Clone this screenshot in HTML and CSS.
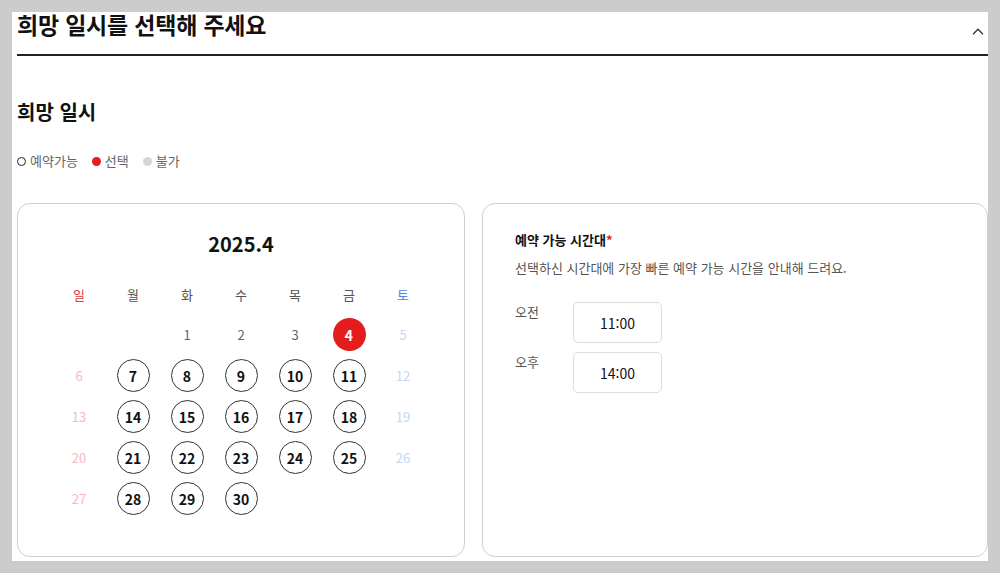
FILE: index.html
```html
<!DOCTYPE html>
<html lang="ko">
<head>
<meta charset="utf-8">
<title>희망 일시</title>
<link rel="stylesheet" href="styles.css">
</head>
<body>
<div class="viewport">
  <div class="content">
    <header class="header">
      <h1 class="title">희망 일시를 선택해 주세요</h1>
      <svg class="chevron" width="12" height="7" viewBox="0 0 12 7"><path d="M1 6.2 L6 1.2 L11 6.2" fill="none" stroke="#333" stroke-width="1.3"/></svg>
    </header>

    <h2 class="section-title">희망 일시</h2>

    <div class="legend">
      <span class="legend-item"><span class="dot dot-open"></span>예약가능</span>
      <span class="legend-item"><span class="dot dot-selected"></span>선택</span>
      <span class="legend-item"><span class="dot dot-disabled"></span>불가</span>
    </div>

    <div class="cards">
      <div class="card calendar-card">
        <div class="month">2025.4</div>
        <div class="cal-grid">
          <span class="wd sun">일</span><span class="wd">월</span><span class="wd">화</span><span class="wd">수</span><span class="wd">목</span><span class="wd">금</span><span class="wd sat">토</span>

          <span class="day"></span><span class="day"></span>
          <span class="day off">1</span><span class="day off">2</span><span class="day off">3</span>
          <span class="day selected">4</span><span class="day sat-day">5</span>

          <span class="day sun-day">6</span>
          <span class="day avail">7</span><span class="day avail">8</span><span class="day avail">9</span><span class="day avail">10</span><span class="day avail">11</span>
          <span class="day sat-day">12</span>

          <span class="day sun-day">13</span>
          <span class="day avail">14</span><span class="day avail">15</span><span class="day avail">16</span><span class="day avail">17</span><span class="day avail">18</span>
          <span class="day sat-day">19</span>

          <span class="day sun-day">20</span>
          <span class="day avail">21</span><span class="day avail">22</span><span class="day avail">23</span><span class="day avail">24</span><span class="day avail">25</span>
          <span class="day sat-day">26</span>

          <span class="day sun-day">27</span>
          <span class="day avail">28</span><span class="day avail">29</span><span class="day avail">30</span>
        </div>
      </div>

      <div class="card time-card">
        <div class="time-title">예약 가능 시간대<span class="req">*</span></div>
        <p class="time-desc">선택하신 시간대에 가장 빠른 예약 가능 시간을 안내해 드려요.</p>
        <div class="time-rows">
          <div class="time-row">
            <span class="time-label">오전</span>
            <button class="time-btn">11:00</button>
          </div>
          <div class="time-row">
            <span class="time-label">오후</span>
            <button class="time-btn">14:00</button>
          </div>
        </div>
      </div>
    </div>
  </div>
</div>
</body>
</html>
```

FILE: styles.css
```css
* { box-sizing: border-box; }

html, body {
  margin: 0;
  padding: 0;
}

body {
  background: #cccccc;
  padding: 12px;
  font-family: "Noto Sans CJK KR", "Noto Sans", sans-serif;
  color: #111;
}

.viewport {
  width: 976px;
  height: 549px;
  background: #fff;
  overflow: hidden;
}

.content {
  padding-left: 5px;
}

.header {
  display: flex;
  justify-content: space-between;
  align-items: flex-start;
  height: 44px;
  border-bottom: 2px solid #222;
}

.title {
  margin: 0;
  font-size: 23px;
  line-height: 24px;
  font-weight: 700;
  letter-spacing: -0.2px;
}

.chevron {
  margin-top: 16px;
  margin-right: 4px;
}

.section-title {
  margin: 42px 0 0;
  font-size: 20px;
  line-height: 28px;
  font-weight: 700;
}

.legend {
  display: flex;
  align-items: center;
  gap: 14px;
  margin-top: 25px;
  font-size: 13px;
  line-height: 20px;
  color: #666;
}

.legend-item {
  display: flex;
  align-items: center;
  gap: 4px;
}

.dot {
  display: inline-block;
  width: 9px;
  height: 9px;
  border-radius: 50%;
}

.dot-open { border: 1.5px solid #222; }
.dot-selected { background: #e41c1c; }
.dot-disabled { background: #d6d6d6; }

.cards {
  display: grid;
  grid-template-columns: 448px 1fr;
  gap: 17px;
  margin-top: 32px;
}

.card {
  border: 1px solid #cfcfcf;
  border-radius: 13px;
  background: #fff;
}

.calendar-card {
  padding: 26px 0 41px;
}

.month {
  text-align: center;
  font-size: 20px;
  line-height: 28px;
  font-weight: 700;
  margin-bottom: 20px;
}

.cal-grid {
  display: grid;
  grid-template-columns: repeat(7, 54px);
  grid-template-rows: 32px;
  grid-auto-rows: 33px;
  row-gap: 8px;
  justify-content: center;
}

.wd {
  display: flex;
  align-items: center;
  justify-content: center;
  font-size: 13px;
  color: #555;
}

.wd.sun { color: #e53935; }
.wd.sat { color: #4f84e8; }

.day {
  display: flex;
  align-items: center;
  justify-content: center;
  justify-self: center;
  width: 33px;
  height: 33px;
  font-size: 13px;
  color: #666;
  border-radius: 50%;
}

.day.sun-day { color: #f4b9bf; }
.day.sat-day { color: #c6d6f6; }

.day.avail {
  border: 1px solid #333;
  color: #111;
  font-weight: 700;
  font-size: 14px;
}

.day.selected {
  background: #e41c1c;
  color: #fff;
  font-weight: 700;
  font-size: 14px;
}

.time-card {
  padding: 26px 32px;
}

.time-title {
  font-size: 13px;
  line-height: 20px;
  font-weight: 700;
  color: #111;
}

.req { color: #e41c1c; }

.time-desc {
  margin: 8px 0 0;
  font-size: 13px;
  line-height: 20px;
  color: #555;
}

.time-rows {
  display: flex;
  flex-direction: column;
  gap: 9px;
  margin-top: 24px;
}

.time-row {
  display: flex;
  align-items: flex-start;
}

.time-label {
  width: 58px;
  font-size: 13px;
  line-height: 20px;
  color: #555;
}

.time-btn {
  width: 89px;
  height: 41px;
  border: 1px solid #dcdcdc;
  border-radius: 5px;
  background: #fff;
  font-family: inherit;
  font-size: 14px;
  color: #111;
  padding: 0;
}
```
